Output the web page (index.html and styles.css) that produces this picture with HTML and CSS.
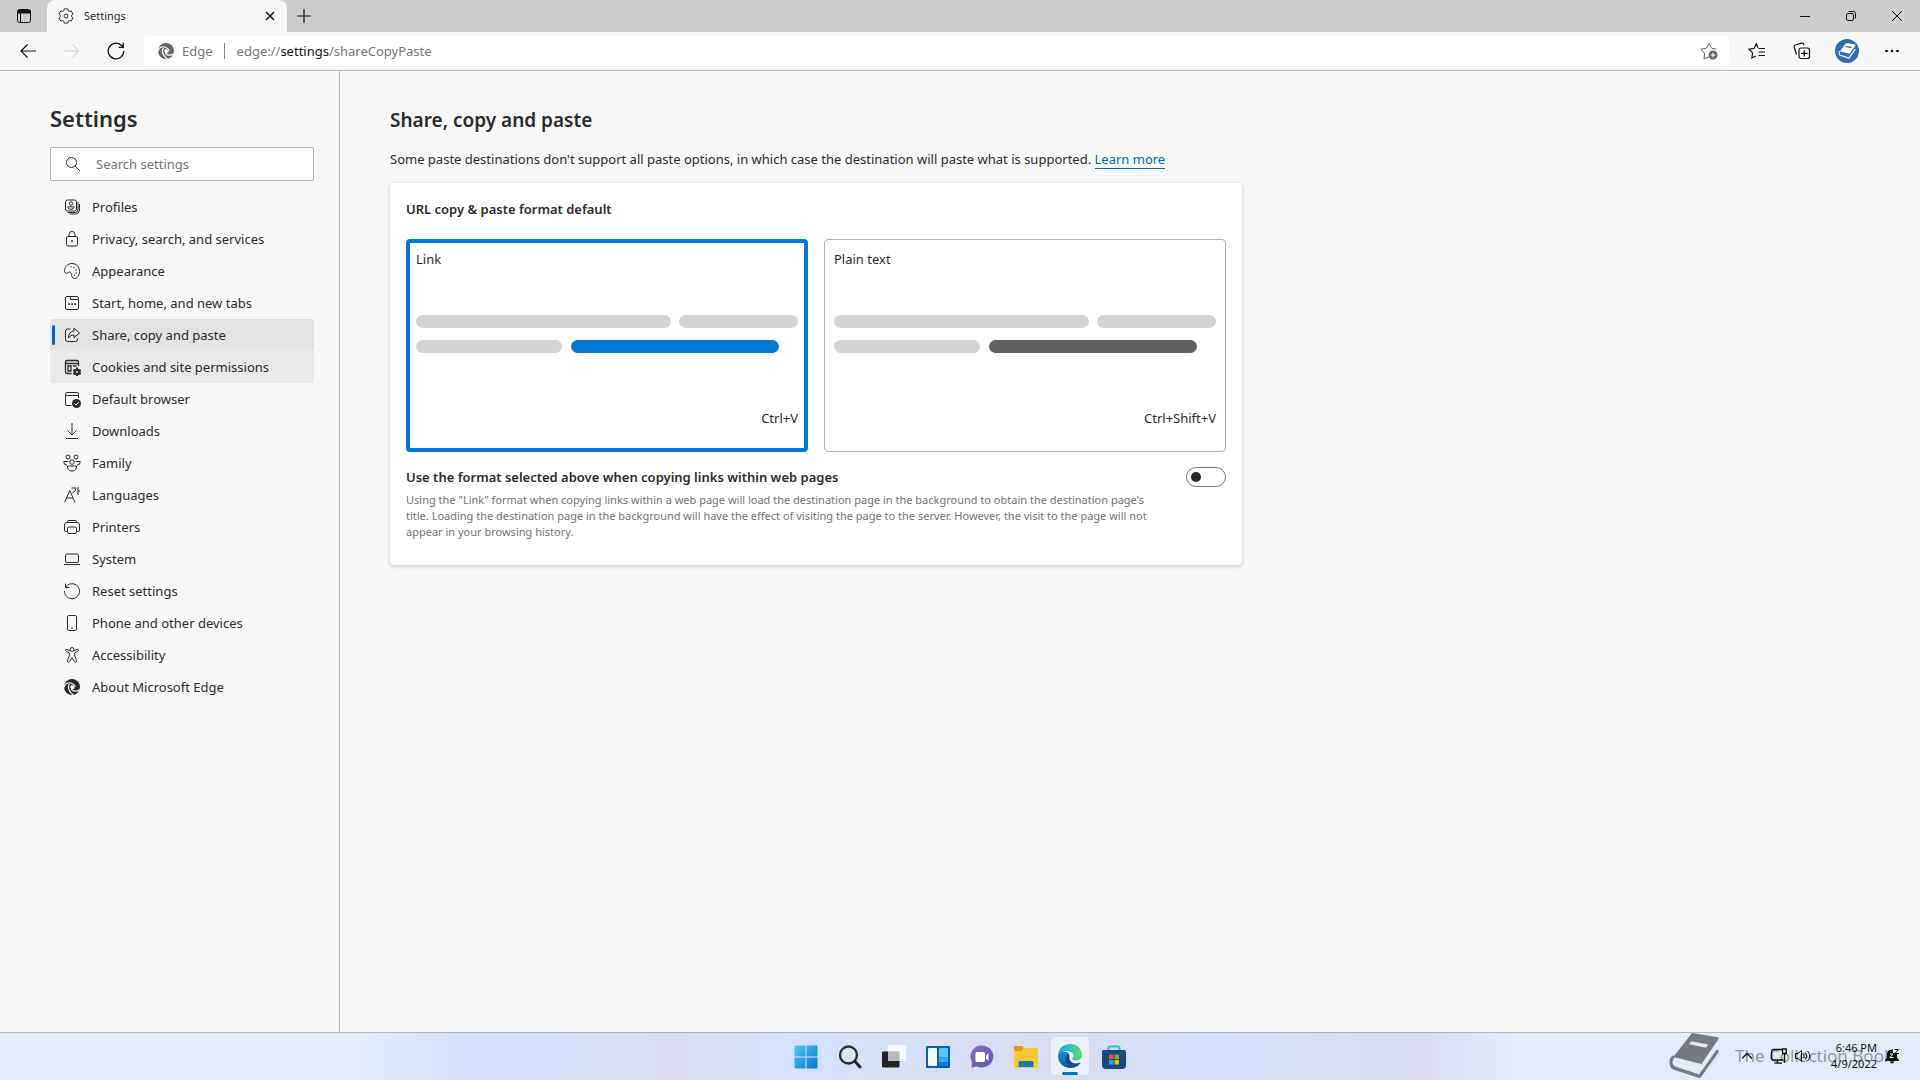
FILE: index.html
```html
<!DOCTYPE html>
<html lang="en">
<head>
<meta charset="utf-8">
<meta name="viewport" content="width=device-width, initial-scale=1">
<title>Settings</title>
<link rel="stylesheet" href="styles.css">
</head>
<body>
<svg class="defs" aria-hidden="true">
  <symbol id="edge-mono" viewBox="0 0 16 16">
    <circle cx="8" cy="8" r="8" fill="currentColor"/>
    <g fill="none" stroke="var(--cut)" stroke-width="1.200" stroke-linecap="round">
      <path d="M0 8C1 4.400 4.500 3 7.500 4.200 9.500 5 10.600 6.200 11 7.400"/>
      <path d="M5.200 5.200C3.600 8 4.600 12.500 9 15.700"/>
      <path d="M15.300 10.800C13 13 9 12.400 7.600 10.400"/>
    </g>
    <path d="M7.200 6.300C9 5.700 11 7 10.600 8.900 10.200 10 8.500 10.800 7.400 10 6 9 6 7 7.200 6.300Z" fill="var(--cut)"/>
  </symbol>
  <symbol id="book" viewBox="0 0 150 140">
    <path d="M69 0 147 13Q152 15 149 20L98 94 12 73Z" fill="currentColor"/>
    <path d="M11 74C0 84 4 102 16 107L92 132 146 56" fill="none" stroke="currentColor" stroke-width="10" stroke-linejoin="round" stroke-linecap="round"/>
    <path d="M66 25 118 35 112 45 60 34Z" fill="var(--cut)"/>
  </symbol>
</svg>

<header class="tabstrip">
  <button class="tab-menu" aria-label="Tab actions menu"><svg class="i16" viewBox="0 0 16 16"><rect x="1.500" y="1.500" width="13" height="13" rx="2"/><path d="M2 2.500H14V5H2Z" fill="currentColor"/><path d="M4.500 5V14"/></svg></button>
  <div class="tab">
    <svg class="i16" viewBox="0 0 16 16"><path stroke-linejoin="round" d="M6.230.92H9.770L10.280 2.880 11.290 3.470 13.250 2.930 15.020 5.990 13.570 7.410V8.590L15.020 10.010 13.250 13.070 11.290 12.530 10.280 13.120 9.770 15.080H6.230L5.720 13.120 4.710 12.530 2.750 13.070.98 10.010 2.430 8.590V7.410L.98 5.990 2.750 2.930 4.710 3.470 5.720 2.880Z"/><circle cx="8" cy="8" r="2"/></svg>
    <span class="tab-title">Settings</span>
    <button class="tab-close" aria-label="Close tab"><svg class="i10" viewBox="0 0 10 10"><path stroke-width="1.500" d="M1 1 9 9M9 1 1 9"/></svg></button>
  </div>
  <button class="new-tab" aria-label="New tab"><svg class="i16" viewBox="0 0 16 16"><path stroke-width="1.200" d="M8 1V15M1 8H15"/></svg></button>
  <div class="window-buttons">
    <button aria-label="Minimize"><svg class="i10" viewBox="0 0 10 10"><path d="M0 5.500H10"/></svg></button>
    <button aria-label="Restore"><svg class="i10" viewBox="0 0 10 10"><rect x=".5" y="2.500" width="7" height="7" rx="1.500"/><path d="M2.500.5H7.500Q9.500.5 9.500 2.500V7.500"/></svg></button>
    <button aria-label="Close"><svg class="i10" viewBox="0 0 10 10"><path d="M0 0 10 10M10 0 0 10"/></svg></button>
  </div>
</header>

<nav class="toolbar" aria-label="Browser">
  <button aria-label="Back"><svg class="i16" viewBox="0 0 16 16"><path stroke-width="1.200" d="M16 8H1M7.500 1.500 1 8 7.500 14.500"/></svg></button>
  <button aria-label="Forward" disabled><svg class="i16" viewBox="0 0 16 16"><path d="M0 8H15M8.500 1.500 15 8 8.500 14.500"/></svg></button>
  <button aria-label="Refresh"><svg class="i18" viewBox="0 0 18 18"><path stroke-width="1.300" d="M16.800 9A7.800 7.800 0 1 1 14.500 3.500L16 5M16.200.8V5.400H11.600"/></svg></button>
  <div class="address">
    <svg class="i16 grey" viewBox="0 0 16 16"><use href="#edge-mono"/></svg>
    <span class="site">Edge</span>
    <div class="url" role="textbox" aria-label="Address" contenteditable="true" spellcheck="false">edge://<b>settings</b>/shareCopyPaste</div>
    <button class="favorite" aria-label="Add to favorites"><svg class="i18" viewBox="0 0 18 18"><path d="M9 15 4 17 4.600 11.300 1 7.200 6.300 6.300 9 1.200 11.700 6.300 16.500 7.200"/><circle cx="13" cy="13" r="4.500" fill="currentColor" stroke="none"/><path stroke="#fff" d="M10.500 13H15.500M13 10.500V15.500"/></svg></button>
  </div>
  <div class="tools">
    <button aria-label="Favorites"><svg class="i18" viewBox="0 0 18 18"><path stroke-width="1.200" d="M10 5.800 8.300 1.800 6 6.400 1 7.200 4.600 10.900 3.900 16 7.800 14M10.500 6.500H17M10.500 10H17M10.500 13.500H17"/></svg></button>
    <button aria-label="Collections"><svg class="i18" viewBox="0 0 18 18"><path stroke-width="1.200" d="M3.500 12.500 1.200 5Q.8 3.500 2.300 3L8.500 1.200Q10.500.8 11 3"/><rect stroke-width="1.200" x="6" y="6" width="10.500" height="10.500" rx="2"/><path stroke-width="1.200" d="M11.300 8V14.500M8 11.300H14.500"/></svg></button>
    <button aria-label="Profile"><span class="avatar"><svg viewBox="0 0 150 140"><use href="#book"/></svg></span></button>
    <button aria-label="Settings and more"><svg class="i16" viewBox="0 0 16 16"><g fill="currentColor" stroke="none"><circle cx="2.500" cy="8" r="1.300"/><circle cx="8" cy="8" r="1.300"/><circle cx="13.500" cy="8" r="1.300"/></g></svg></button>
  </div>
</nav>

<div class="page">
  <aside class="sidebar">
    <h1>Settings</h1>
    <div class="search">
      <svg class="i16" viewBox="0 0 16 16"><circle cx="6.500" cy="6.500" r="5"/><path d="M10 10 15 15"/></svg>
      <input type="search" aria-label="Search settings" placeholder="Search settings">
    </div>
    <nav class="menu" aria-label="Settings">
      <a href="#profiles"><svg class="i18" viewBox="0 0 18 18"><rect x="2.500" y="2" width="11" height="11" rx="2"/><circle cx="8" cy="5.500" r="1.700"/><path d="M4.800 8.800H11.200Q11.200 11.300 8 11.300 4.800 11.300 4.800 8.800ZM15 4V11.500Q15 14.500 12 14.500H4.500M16.500 6V12Q16.500 16 12.500 16H6.500"/></svg>Profiles</a>
      <a href="#privacy"><svg class="i18" viewBox="0 0 18 18"><rect x="3.500" y="6.500" width="11" height="9.500" rx="1.500"/><path d="M6 6.500V4.500Q6 1.500 9 1.500 12 1.500 12 4.500V6.500"/><circle cx="9" cy="11" r=".6" fill="currentColor"/></svg>Privacy, search, and services</a>
      <a href="#appearance"><svg class="i18" viewBox="0 0 18 18"><path d="M1.500 8.500C2 4 5.500 1.500 9 1.500 13.500 1.500 16.500 5 16.500 9.500 16.500 13.500 14 16.500 11.500 16.500 9 16.500 9 14.500 8.500 12.500 8 10.500 7 9 5.500 10.500 3.500 12 1 11 1.500 8.500Z"/><g fill="currentColor" stroke="none"><circle cx="8" cy="4.800" r=".7"/><circle cx="11" cy="5.500" r=".7"/><circle cx="13.200" cy="8" r=".7"/><circle cx="13.200" cy="11" r=".7"/><circle cx="11.500" cy="13.300" r=".7"/></g></svg>Appearance</a>
      <a href="#start"><svg class="i18" viewBox="0 0 18 18"><rect x="2.500" y="2.500" width="13" height="13" rx="1.500"/><path d="M7.500 2.500V5.500H15.500"/><path stroke-width="1.800" stroke-dasharray="1.800 1.200" d="M5.200 10.200H13"/></svg>Start, home, and new tabs</a>
      <a href="#share" class="selected" aria-current="page"><svg class="i18" viewBox="0 0 18 18"><path d="M7.500 3H4.500Q2.500 3 2.500 5V13.500Q2.500 15.500 4.500 15.500H12.500Q14.500 15.500 14.500 13.500V12.500"/><path stroke-linejoin="round" d="M11 2.200 16.500 7 11 11.500V9Q7.500 8.500 5.500 12 5.500 5.500 11 5Z"/></svg>Share, copy and paste</a>
      <a href="#cookies" class="hovered"><svg class="i18" viewBox="0 0 18 18"><path stroke-width="1.300" d="M8.500 15.500H4Q2.500 15.500 2.500 14V4Q2.500 2.500 4 2.500H14Q15.500 2.500 15.500 4V8M2.500 5.500H15.500M5 8H8V13H5ZM10 8H13.500"/><circle cx="14" cy="14" r="3" fill="currentColor"/><path stroke-width="2" d="M14 9.600V18M10.300 11.900 17.700 16.100M17.700 11.900 10.300 16.100"/><circle cx="14" cy="14" r="1" fill="var(--cut)" stroke="none"/></svg>Cookies and site permissions</a>
      <a href="#default"><svg class="i18" viewBox="0 0 18 18"><path d="M8.500 15.500H4Q2.500 15.500 2.500 14V4Q2.500 2.500 4 2.500H14Q15.500 2.500 15.500 4V8M2.500 5.500H15.500"/><circle cx="13.500" cy="13.500" r="4.500" fill="currentColor" stroke="none"/><path stroke="#fff" d="M11.500 13.500 13 15 15.800 12.200"/></svg>Default browser</a>
      <a href="#downloads"><svg class="i18" viewBox="0 0 18 18"><path d="M9 1V13M4.500 8.500 9 13 13.500 8.500M3 16.500H15"/></svg>Downloads</a>
      <a href="#family"><svg class="i18" viewBox="0 0 18 18"><circle cx="5" cy="3" r="2"/><circle cx="13" cy="3" r="2"/><circle cx="9" cy="8" r="2.300"/><path d="M5.500 7.500H.8Q.5 11 4 11.200M12.500 7.500H17.200Q17.500 11 14 11.200M4.500 12H13.500Q13.800 17 9 17 4.200 17 4.500 12Z"/></svg>Family</a>
      <a href="#languages"><svg class="i18" viewBox="0 0 18 18"><path d="M1.500 16.500 6.800 4.500 12 16.500M3.500 12H10M8.500 2H13Q13 5.500 9.500 7M15 1V9M15 5H17"/></svg>Languages</a>
      <a href="#printers"><svg class="i18" viewBox="0 0 18 18"><path d="M4.500 13.500H3Q1.500 13.500 1.500 12V7Q1.500 4.500 4 4.500H14Q16.500 4.500 16.500 7V12Q16.500 13.500 15 13.500H13.500M4 4.500Q4 2.500 6 2.500H12Q14 2.500 14 4.500"/><rect x="4.500" y="9" width="9" height="6.500" rx="1.500"/></svg>Printers</a>
      <a href="#system"><svg class="i18" viewBox="0 0 18 18"><rect x="2.500" y="4" width="13" height="8.500" rx="1.500"/><path d="M1 14.500H17"/></svg>System</a>
      <a href="#reset"><svg class="i18" viewBox="0 0 18 18"><path d="M2.500 1.500V5.500H6.500M2.500 5.500A7.500 7.500 0 1 1 1.500 9"/></svg>Reset settings</a>
      <a href="#phone"><svg class="i18" viewBox="0 0 18 18"><rect x="4.500" y="1.500" width="9" height="15" rx="1.500"/><path d="M8 14H10"/></svg>Phone and other devices</a>
      <a href="#accessibility"><svg class="i18" viewBox="0 0 18 18"><circle cx="9" cy="3.500" r="1.900"/><path stroke-linejoin="round" d="M7.200 4.800 4 3.500Q2.300 3.200 2.500 4.700 2.700 5.300 6.300 6.800V10L4.500 14.500Q4.300 16 5.500 16.200 6.500 16.200 9 11.500 11.500 16.200 12.500 16.200 13.700 16 13.500 14.500L11.700 10V6.800Q15.300 5.300 15.500 4.700 15.700 3.200 14 3.500L10.800 4.800"/></svg>Accessibility</a>
      <a href="#about"><svg class="i18" viewBox="-1 -1 18 18"><use href="#edge-mono" width="16" height="16"/></svg>About Microsoft Edge</a>
    </nav>
  </aside>

  <main class="content">
    <h2>Share, copy and paste</h2>
    <p class="intro">Some paste destinations don't support all paste options, in which case the destination will paste what is supported. <a href="#learn">Learn more</a></p>
    <section class="card">
      <h3 id="format-title">URL copy &amp; paste format default</h3>
      <div class="options" role="radiogroup" aria-labelledby="format-title">
        <label class="option">
          <input type="radio" name="format" checked>
          <span class="option-name">Link</span>
          <span class="sample"><i></i><i></i></span>
          <span class="sample second"><i></i><i class="accent"></i></span>
          <span class="shortcut">Ctrl+V</span>
        </label>
        <label class="option plain">
          <input type="radio" name="format">
          <span class="option-name">Plain text</span>
          <span class="sample"><i></i><i></i></span>
          <span class="sample second"><i></i><i class="accent"></i></span>
          <span class="shortcut">Ctrl+Shift+V</span>
        </label>
      </div>
      <div class="setting">
        <label for="within">Use the format selected above when copying links within web pages</label>
        <input class="switch" type="checkbox" role="switch" id="within" aria-describedby="within-note">
      </div>
      <p class="note" id="within-note">Using the "Link" format when copying links within a web page will load the destination page in the background to obtain the destination page's title. Loading the destination page in the background will have the effect of visiting the page to the server. However, the visit to the page will not appear in your browsing history.</p>
    </section>
  </main>
</div>

<footer class="taskbar">
  <div class="apps">
    <button aria-label="Start"><svg viewBox="0 0 24 24"><defs><linearGradient id="win" x1="0" y1="0" x2="1" y2="1"><stop stop-color="#4cc8f4"/><stop offset="1" stop-color="#0a74d0"/></linearGradient></defs><path fill="url(#win)" d="M1.500.5H11.500V11.500H.5V1.500Q.5.5 1.500.5ZM12.500.5H22.500Q23.500.5 23.500 1.500V11.500H12.500ZM.5 12.500H11.500V23.500H1.500Q.5 23.500.5 22.500ZM12.500 12.500H23.500V22.500Q23.500 23.500 22.500 23.500H12.500Z"/></svg></button>
    <button aria-label="Search"><svg viewBox="0 0 24 24"><circle cx="10.500" cy="10" r="8.500" fill="#e8edf8" fill-opacity=".5" stroke="#303236" stroke-width="2.400"/><path d="M17 16.500 22 22" stroke="#202225" stroke-width="3" stroke-linecap="round"/></svg></button>
    <button aria-label="Task view"><svg viewBox="0 0 24 24"><rect x="0" y="6.500" width="17.500" height="16" rx="1" fill="#222427"/><rect x="6" y="0" width="18" height="16" rx="1" fill="#fff" fill-opacity=".8"/><rect x="6" y="6.500" width="11.500" height="9.500" fill="#b9babd"/></svg></button>
    <button aria-label="Widgets"><svg viewBox="0 0 24 24"><rect x="0" y="1" width="24" height="22" rx="1" fill="#0b5ea8"/><rect x="2" y="3" width="9" height="18" rx="1" fill="#f5f9fe"/><rect x="13" y="3" width="9" height="9.500" rx="1" fill="#5cc8fb"/><rect x="13" y="12.500" width="9" height="4.500" fill="#37a9f1"/><rect x="13" y="17" width="9" height="4" rx="1" fill="#1279d6"/></svg></button>
    <button aria-label="Chat"><svg viewBox="0 0 24 24"><defs><linearGradient id="chat" x1="0" y1="0" x2="1" y2="1"><stop stop-color="#8c6fae"/><stop offset="1" stop-color="#5754d0"/></linearGradient></defs><path d="M12 .5A11.500 11 0 1 1 7 21.500L1.500 22.500 2 17A11 11 0 0 1 12 .5Z" fill="url(#chat)"/><rect x="5.500" y="7" width="9.500" height="10" rx="1.500" fill="#fff"/><path d="M16 10.500 18.500 8V16L16 13.500Z" fill="#fff"/></svg></button>
    <button aria-label="File Explorer"><svg viewBox="0 0 24 24"><path d="M0 2Q0 1 1 1H8Q9.500 1 9.500 3V7H0Z" fill="#d99b12"/><path d="M0 6H7.500L10 3H23Q24 3 24 4V22Q24 23 23 23H1Q0 23 0 22Z" fill="#fbc834"/><path d="M4.500 22V17.500Q4.500 16 6 16H18Q19.500 16 19.500 17.500V22Z" fill="#1777c9"/></svg></button>
    <button aria-label="Microsoft Edge" class="active"><svg viewBox="0 0 24 24"><defs><linearGradient id="e1" x1="0" y1="0" x2="1" y2="0"><stop stop-color="#1fa5e3"/><stop offset=".5" stop-color="#2fc2cc"/><stop offset="1" stop-color="#63dc5c"/></linearGradient><linearGradient id="e2" x1="0" y1="0" x2="0" y2="1"><stop stop-color="#1489d8"/><stop offset="1" stop-color="#0f5aa8"/></linearGradient></defs><path d="M0 12C0 4 6 0 12 0 19 0 24 5 24 10.500 24 14 21.500 16.500 18.500 16.500 15.500 16.500 14 15.500 14 14.500 15 13.800 15.500 12.500 15.500 11.500 15 6 3 5 0 12Z" fill="url(#e1)"/><path d="M0 12C1 6.500 8 6.500 11 9.500 9 10.500 8.500 12.500 8.500 14 8.500 19 13 23 17 23 8 26.500 0 20 0 12Z" fill="url(#e2)"/><path d="M11 9.500C5 12 7.500 23.500 16 23.500 20 22.500 22 20 22.700 18 17 21.500 10.500 18 11.500 13Z" fill="#114c8f"/></svg></button>
    <button aria-label="Microsoft Store"><svg viewBox="0 0 24 24"><path d="M6.500 6V3Q6.500 1.500 8 1.500H16Q17.500 1.500 17.500 3V6" fill="none" stroke="#3bb5ea" stroke-width="2"/><path d="M0 6.500Q0 5 1.500 5H22.500Q24 5 24 6.500V20Q24 24 20 24H4Q0 24 0 20Z" fill="#174a80"/><path fill="#f25022" d="M7 9.500H11.500V14H7Z"/><path fill="#7fba00" d="M12.500 9.500H17V14H12.500Z"/><path fill="#22a6ee" d="M7 15H11.500V19.500H7Z"/><path fill="#ffb900" d="M12.500 15H17V19.500H12.500Z"/></svg></button>
  </div>
  <div class="tray">
    <button aria-label="Show hidden icons"><svg class="i10" viewBox="0 0 10 10"><path stroke-width="1.300" d="M0 7.500 5 2.500 10 7.500"/></svg></button>
    <button aria-label="Network"><svg class="i16" viewBox="0 0 16 16"><path stroke-width="1.300" d="M11 1.500H2.500Q.7 1.500.7 3V10Q.7 12 2.500 12H12.500M6.500 12V15M3.500 15.200H11"/><path stroke-width="1.300" d="M11.500 1H15.300V5.500H11.500ZM13.500 5.500V15"/></svg></button>
    <button aria-label="Volume"><svg class="i16" viewBox="0 0 16 16"><path d="M.5 5.500H3L6.500 2.500V13.500L3 10.500H.5ZM8.500 6Q9.800 8 8.500 10M10.500 4.500Q13 8 10.500 11.500M12.500 3Q17 8 12.500 13"/></svg></button>
    <button class="clock"><span>6:46 PM</span><span>4/9/2022</span></button>
    <button aria-label="Notifications"><svg class="i16" viewBox="0 0 16 16"><path fill="currentColor" stroke="none" d="M1 12 3 9.500V6Q3 2 7.500 1.500H9V5H13V9.500L15 12V13H1ZM5.500 13.500H10.500Q8 17.500 5.500 13.500Z"/><path d="M10.500 1.500H14.500L11 5.500H15"/><path stroke="#e3edf8" d="M6 6H9L6 9.500H9.500"/></svg></button>
  </div>
  <div class="watermark"><svg viewBox="0 0 150 140"><use href="#book"/></svg><span>The Collection Book</span></div>
</footer>
</body>
</html>
```
FILE: styles.css
```css
* { box-sizing: border-box; }

:root {
  --text: #2b2b2b;
  --blue: #0078d4;
  --surface: #f7f7f7;
  --cut: #f7f7f7;
}

body {
  margin: 0;
  min-height: 100vh;
  display: flex;
  flex-direction: column;
  background: var(--surface);
  color: var(--text);
  font: 13px/20px "Noto Sans", "Open Sans", sans-serif;
}

h1, h2, h3, p { margin: 0; }

button {
  display: flex;
  align-items: center;
  justify-content: center;
  padding: 0;
  border: 0;
  background: none;
  color: #111;
  font: inherit;
}

svg { display: block; flex: none; }
.defs { position: absolute; width: 0; height: 0; }

.i10, .i16, .i18 {
  fill: none;
  stroke: currentColor;
  stroke-width: 1;
}
.i10 { width: 10px; height: 10px; }
.i16 { width: 16px; height: 16px; }
.i18 { width: 18px; height: 18px; }
.i16 use, .i18 use { stroke: none; }

/* Tab strip */
.tabstrip {
  display: flex;
  height: 32px;
  background: #cdcdcd;
}
.tab-menu { width: 47px; }
.tab {
  display: flex;
  align-items: center;
  gap: 10px;
  width: 240px;
  padding: 0 12px 0 11px;
  border-radius: 8px 8px 0 0;
  background: var(--surface);
  font-size: 11px;
}
.tab-title { flex: 1; }
.new-tab { width: 34px; }
.window-buttons { display: flex; margin-left: auto; }
.window-buttons button { width: 46px; }

/* Toolbar */
.toolbar {
  display: flex;
  align-items: center;
  height: 39px;
  padding: 0 6px;
  border-bottom: 1px solid #b5b5b5;
}
.toolbar button { width: 44px; height: 30px; }
.toolbar button:disabled { color: #ccc; }
.address {
  --cut: #fff;
  display: flex;
  align-items: center;
  flex: 1;
  height: 30px;
  margin: 0 6px;
  padding-left: 14px;
  border-radius: 4px;
  background: #fff;
  color: #767676;
}
.site {
  margin-left: 8px;
  padding-right: 11px;
  border-right: 1px solid #8a8a8a;
  line-height: 16px;
}
.url { flex: 1; padding-left: 12px; }
.url b { color: #111; font-weight: 400; }
.grey { color: #666; }
.toolbar .favorite { width: 40px; color: #666; }
.tools { display: flex; gap: 1px; }
.avatar {
  --cut: #2f6eb5;
  display: grid;
  place-items: center;
  width: 24px;
  height: 24px;
  border-radius: 50%;
  background: #2f6eb5;
  color: #fff;
}
.avatar svg { width: 18px; height: 16px; }

/* Page */
.page { display: flex; flex: 1; }
.sidebar {
  width: 340px;
  padding: 31px 25px 32px 50px;
  border-right: 1px solid #b5b5b5;
}
.sidebar h1 {
  font-size: 22px;
  line-height: 32px;
  font-weight: 600;
}
.search {
  display: flex;
  align-items: center;
  gap: 15px;
  height: 34px;
  margin: 13px 0 10px;
  padding-left: 14px;
  border: 1px solid #b3b3b3;
  border-radius: 2px;
  background: #fff;
}
.search input {
  flex: 1;
  min-width: 0;
  padding: 0;
  border: 0;
  outline: 0;
  background: none;
  font: inherit;
}
.search input::placeholder { color: #737373; }
.menu a {
  display: flex;
  align-items: center;
  gap: 11px;
  height: 32px;
  padding-left: 13px;
  border-radius: 2px;
  color: var(--text);
  text-decoration: none;
}
.menu .selected { background: #e3e3e3; padding-left: 2px; gap: 8px; }
.menu .selected::before {
  content: "";
  width: 3px;
  height: 20px;
  border-radius: 2px;
  background: #0067b8;
}
.menu .selected svg { margin-right: 3px; }
.menu .hovered { --cut: #e9e9e9; background: #e9e9e9; }

.content { flex: 1; padding: 37px 50px; }
h2 {
  font-size: 19px;
  line-height: 24px;
  font-weight: 600;
}
.intro { margin: 17px 0 14px; }
.intro a {
  border-bottom: 1px solid #0067b8;
  color: #0067b8;
  text-decoration: none;
}
.card {
  max-width: 852px;
  padding: 16px 16px 25px;
  border-radius: 4px;
  background: #fff;
  box-shadow: 0 1px 4px rgba(0, 0, 0, .2);
}
h3 { font-size: 13px; font-weight: 600; }
.options {
  display: grid;
  grid-template-columns: 1fr 1fr;
  gap: 16px;
  margin: 20px 0 15px;
}
.option {
  display: flex;
  flex-direction: column;
  padding: 9px 9px 23px;
  border: 1px solid #b3b3b3;
  border-radius: 4px;
}
.option:has(:checked) {
  padding: 6px 6px 20px;
  border: 4px solid var(--blue);
}
.option input { position: absolute; opacity: 0; }
.option-name { margin-bottom: 46px; }
.sample {
  display: grid;
  grid-template-columns: 15fr 7fr;
  gap: 8px;
  margin-bottom: 12px;
}
.sample.second { grid-template-columns: 73fr 104fr 5fr; gap: 9px; }
.sample i {
  height: 13px;
  border-radius: 8px;
  background: #d4d4d4;
}
.sample .accent { background: var(--blue); }
.plain .accent { background: #606060; }
.shortcut { margin-top: 43px; text-align: right; }
.setting {
  display: flex;
  align-items: center;
  justify-content: space-between;
  font-weight: 600;
}
.switch {
  appearance: none;
  display: flex;
  align-items: center;
  width: 40px;
  height: 20px;
  margin: 0;
  padding: 0 4px;
  border: 1px solid #767676;
  border-radius: 10px;
  background: #fff;
}
.switch::before {
  content: "";
  width: 10px;
  height: 10px;
  border-radius: 50%;
  background: #2b2b2b;
}
.switch:checked { justify-content: flex-end; }
.note {
  max-width: 752px;
  margin-top: 5px;
  color: #737373;
  font-size: 11px;
  line-height: 16px;
}

/* Taskbar */
.taskbar {
  position: relative;
  display: grid;
  grid-template-columns: 1fr auto 1fr;
  height: 48px;
  border-top: 1px solid #b0b5c0;
  background: linear-gradient(90deg, #e3edf8 18%, #d2e0fa 24%, #d4e1fa 29%, #d9dcf0 35%, #d4e2fc 41%, #d9dcf0 56%, #d3e1fc 63%, #d8dbf0 74%, #e1ecf8 79%);
}
.apps { grid-column: 2; display: flex; }
.apps button { width: 44px; }
.apps svg { width: 24px; height: 24px; }
.apps .active {
  position: relative;
  width: 38px;
  height: 38px;
  margin: 4px 3px;
  border-radius: 4px;
  background: #ecf0fa;
}
.active::after {
  content: "";
  position: absolute;
  bottom: 0;
  width: 16px;
  height: 3px;
  border-radius: 2px;
  background: #0a6fc2;
}
.tray {
  display: flex;
  justify-content: flex-end;
  align-items: center;
  height: 46px;
  padding-right: 18px;
  z-index: 1;
}
.tray button { width: 24px; height: 40px; }
.tray button:first-child { width: 40px; }
.tray .clock {
  flex-direction: column;
  align-items: flex-end;
  width: 62px;
  margin-right: 5px;
  font-size: 11px;
  line-height: 16px;
}
.tray button:last-child { width: 20px; }
.watermark {
  --cut: #e3edf8;
  position: absolute;
  top: 0;
  right: 27px;
  display: flex;
  align-items: center;
  gap: 16px;
  height: 45px;
  color: #747a80;
  font-size: 17px;
  pointer-events: none;
}
.watermark svg { width: 50px; height: 46px; }
.watermark span { opacity: .75; }
```
